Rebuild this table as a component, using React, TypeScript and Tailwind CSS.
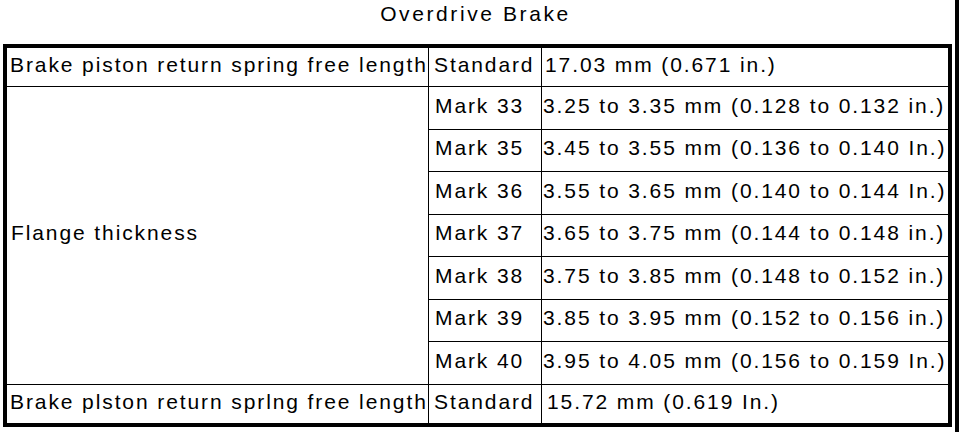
import React from 'react';

const markRows = [
  ['Mark 33', '3.25 to 3.35 mm (0.128 to 0.132 in.)', 'h-[43px]'],
  ['Mark 35', '3.45 to 3.55 mm (0.136 to 0.140 In.)', 'h-[42px]'],
  ['Mark 36', '3.55 to 3.65 mm (0.140 to 0.144 In.)', 'h-[43px]'],
  ['Mark 37', '3.65 to 3.75 mm (0.144 to 0.148 in.)', 'h-[42px]'],
  ['Mark 38', '3.75 to 3.85 mm (0.148 to 0.152 in.)', 'h-[43px]'],
  ['Mark 39', '3.85 to 3.95 mm (0.152 to 0.156 in.)', 'h-[42px]'],
  ['Mark 40', '3.95 to 4.05 mm (0.156 to 0.159 In.)', 'h-[43px]'],
];

const cell = 'border-black p-0 pb-[5px] align-middle whitespace-nowrap';

export default function App() {
  return (
    <div className="h-[432px] w-[960px] overflow-hidden bg-white font-['Liberation_Sans',Arial,sans-serif] text-[21px] leading-[22px] tracking-[1.9px] text-black">
      <div className="h-full w-[959px] border-r-4 border-black">
        <div className="flex h-[44px] justify-center pt-[3px] pr-[4px] tracking-[2.6px]">
          Overdrive Brake
        </div>
        <table className="ml-[3px] w-[949px] table-fixed border-separate border-spacing-0 border-4 border-black">
          <colgroup>
            <col className="w-[422px]" />
            <col className="w-[113px]" />
            <col className="w-[406px]" />
          </colgroup>
          <tbody>
            <tr className="h-[39px]">
              <td className={`${cell} border-r border-b pl-[3px]`}>
                Brake piston return spring free length
              </td>
              <td className={`${cell} border-r border-b pl-[5px]`}>Standard</td>
              <td className={`${cell} border-b pl-[3px]`}>17.03 mm (0.671 in.)</td>
            </tr>
            {markRows.map(([mark, value, h], i) => (
              <tr key={mark} className={h}>
                {i === 0 && (
                  <td rowSpan={7} className={`${cell} border-r border-b pl-[4px]`}>
                    Flange thickness
                  </td>
                )}
                <td className={`${cell} border-r border-b pl-[6px]`}>{mark}</td>
                <td className={`${cell} border-b pl-[1px]`}>{value}</td>
              </tr>
            ))}
            <tr className="h-[38px]">
              <td className={`${cell} border-r pl-[3px]`}>
                Brake plston return sprlng free length
              </td>
              <td className={`${cell} border-r pl-[5px]`}>Standard</td>
              <td className={`${cell} pl-[5px]`}>15.72 mm (0.619 In.)</td>
            </tr>
          </tbody>
        </table>
      </div>
    </div>
  );
}
